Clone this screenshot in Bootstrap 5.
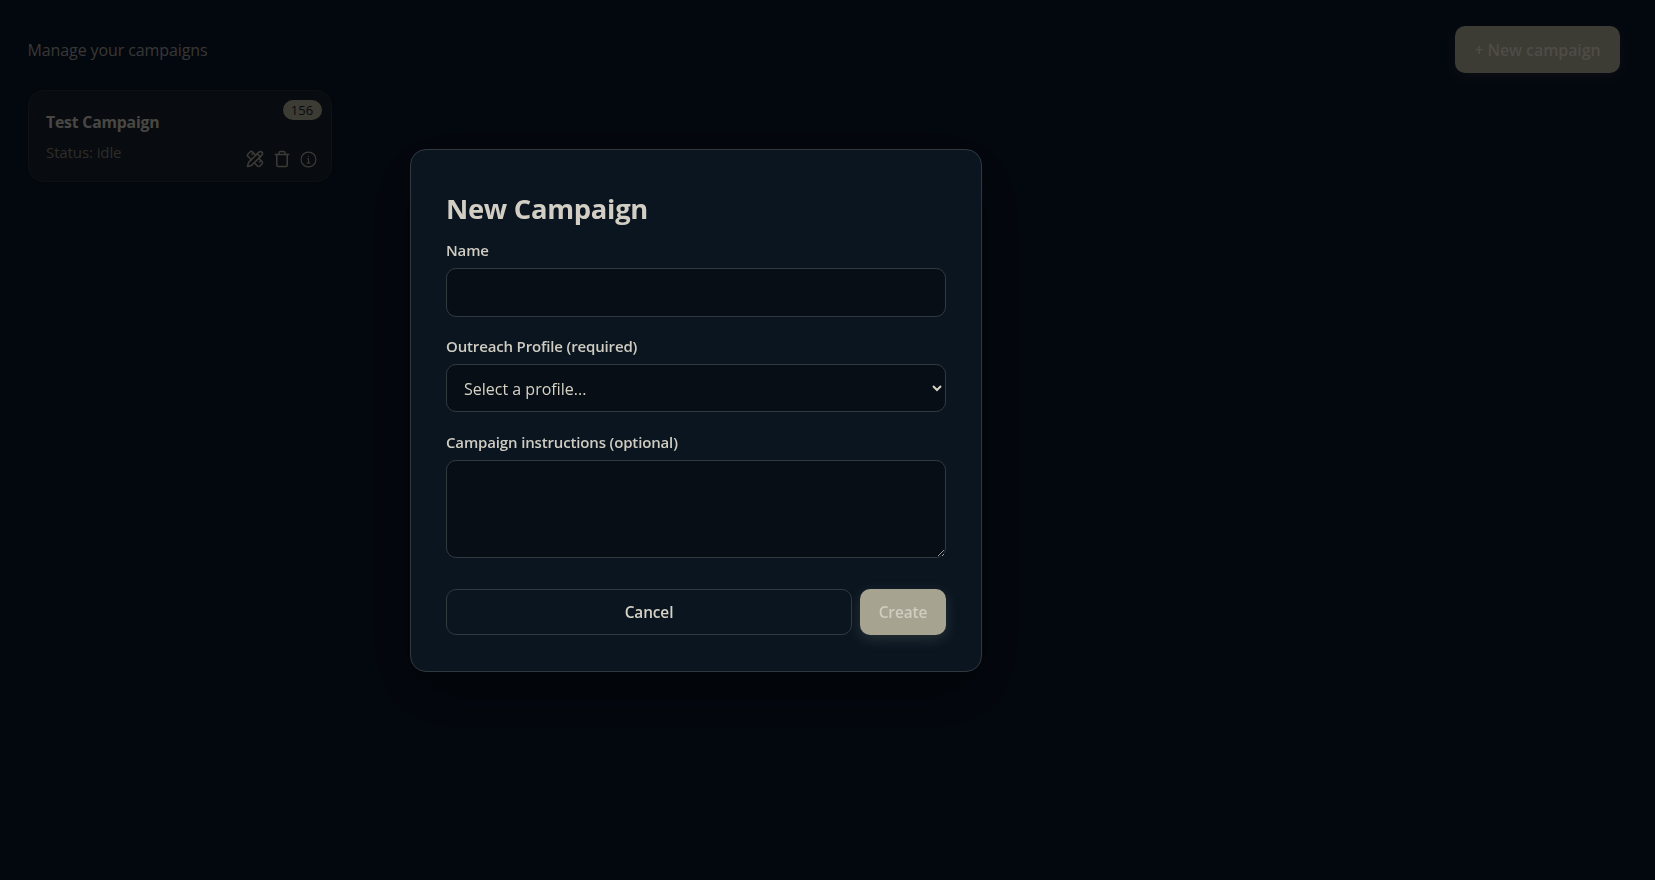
<!DOCTYPE html>
<html lang="en" data-bs-theme="dark">
<head>
  <meta charset="UTF-8">
  <title>Campaigns</title>
  <link href="https://cdn.jsdelivr.net/npm/bootstrap@5.3.3/dist/css/bootstrap.min.css" rel="stylesheet">
  <style>
    html, body { height: 100%; }
    body {
      background: #0a1628;
      color: #d6d2c4;
      font-family: "Open Sans", "Noto Sans", sans-serif;
      color-scheme: dark;
      overflow: hidden;
    }
    .page-wrap { padding: 26px 35px 0 27.5px; }
    .page-sub { font-size: 16px; color: #9a9a94; letter-spacing: -.1px; }
    .btn-new {
      background: #a6a391; color: #d6d2c4; border: 0; border-radius: 10px;
      width: 165px; height: 47px; font-weight: 600; font-size: 16px; letter-spacing: -.1px; padding: 0;
      box-shadow: 0 4px 14px rgba(166,163,145,.15);
    }
    .camp-card {
      position: relative;
      width: 304px; height: 92px; margin-top: 17px;
      background: #18212c; border: 1px solid #2b3134; border-radius: 16px;
      padding: 19px 18px 19px 17.5px;
    }
    .camp-title { font-size: 15.8px; font-weight: 700; color: #c9c6bb; line-height: 24px; letter-spacing: -.2px; }
    .camp-status { font-size: 15px; color: #7f7c70; margin-top: 7px; letter-spacing: -.1px; }
    .camp-count {
      position: absolute; top: 9px; right: 9px; width: 39px; height: 20px;
      background: #a6a391; color: #1a232c; border-radius: 10px;
      font-size: 13px; line-height: 20px; text-align: center;
    }
    .camp-icons { position: absolute; right: 13.5px; bottom: 13px; color: #a3a198; gap: 9px; }
    .camp-icons svg { display: block; width: 18px; height: 18px; fill: none; stroke: currentColor; stroke-width: 2; stroke-linecap: round; stroke-linejoin: round; }
    .camp-icons .info-ico { width: 17px; height: 17px; stroke-width: 1.6; }

    .dim-layer { position: fixed; inset: 0; background: rgba(0,0,0,.64); }
    .new-dialog {
      position: fixed; left: 410px; top: 149px; width: 572px; height: 523px;
      background: #0a1520; border: 1px solid #31393f; border-radius: 16px;
      padding: 39px 35px 36px;
      box-shadow: 0 20px 60px rgba(0,0,0,.45);
    }
    .new-dialog h2 { font-size: 27.4px; font-weight: 700; color: #d2cec3; margin: 0 0 11px; line-height: 40px; letter-spacing: -.3px; }
    .new-dialog .form-label { font-size: 15px; font-weight: 600; color: #cfccc1; line-height: 20px; margin-bottom: 8px; letter-spacing: -.15px; }
    .new-dialog .form-control, .new-dialog .form-select {
      background-color: #070e16; border: 1px solid #31393f; border-radius: 10px;
      color: #d6d2c4; box-shadow: none; font-size: 16px;
    }
    .new-dialog .form-select {
      appearance: auto; background-image: none; height: 48px; padding: 2px 16px 0 13px;
    }
    .name-input { height: 49px; }
    .instr-input { height: 98px; }
    .name-gap { margin-bottom: 19px; }
    .profile-gap { margin-bottom: 20px; }
    .instr-gap { margin-bottom: 31px; }
    .btn-cancel {
      background: transparent; color: #d6d2c4; border: 1px solid #31393f; border-radius: 10px;
      height: 46px; font-weight: 600; font-size: 15.4px; letter-spacing: -.1px; padding-top: 8px;
    }
    .btn-create {
      background: #a6a391; color: #cfccc0; border: 0; border-radius: 10px;
      width: 86px; height: 46px; font-weight: 600; font-size: 15.4px; letter-spacing: -.1px; padding: 2px 0 0;
      box-shadow: 0 4px 14px rgba(166,163,145,.2);
    }
  </style>
</head>
<body>
  <div class="page-wrap">
    <div class="d-flex justify-content-between align-items-center">
      <div class="page-sub">Manage your campaigns</div>
      <button class="btn btn-new">+ New campaign</button>
    </div>
    <div class="camp-card">
      <div class="camp-title">Test Campaign</div>
      <div class="camp-status">Status: idle</div>
      <span class="camp-count">156</span>
      <div class="camp-icons d-flex align-items-center">
        <svg viewBox="0 0 24 24"><path d="M13 7 8.7 2.7a2.41 2.41 0 0 0-3.4 0L2.7 5.3a2.41 2.41 0 0 0 0 3.4L7 13"/><path d="m8 6 2-2"/><path d="m18 16 2-2"/><path d="m17 11 4.3 4.3c.94.94.94 2.46 0 3.4l-2.6 2.6c-.94.94-2.46.94-3.4 0L11 17"/><path d="M21.174 6.812a1 1 0 0 0-3.986-3.987L3.842 16.174a2 2 0 0 0-.5.83l-1.321 4.352a.5.5 0 0 0 .623.622l4.353-1.32a2 2 0 0 0 .83-.497z"/><path d="m15 5 4 4"/></svg>
        <svg viewBox="0 0 24 24"><path d="M3 6h18"/><path d="M19 6v14a2 2 0 0 1-2 2H7a2 2 0 0 1-2-2V6"/><path d="M8 6V4a2 2 0 0 1 2-2h4a2 2 0 0 1 2 2v2"/></svg>
        <svg class="info-ico" viewBox="0 0 24 24"><circle cx="12" cy="12" r="10.5"/><path d="M12 17v-6h-1.5"/><path d="M10 17h4"/><path d="M12 7.5h.01"/></svg>
      </div>
    </div>
  </div>

  <div class="dim-layer"></div>

  <div class="new-dialog">
    <h2>New Campaign</h2>
    <form>
      <div class="name-gap">
        <label class="form-label d-block">Name</label>
        <input type="text" class="form-control name-input">
      </div>
      <div class="profile-gap">
        <label class="form-label d-block">Outreach Profile (required)</label>
        <select class="form-select">
          <option>Select a profile...</option>
        </select>
      </div>
      <div class="instr-gap">
        <label class="form-label d-block">Campaign instructions (optional)</label>
        <textarea class="form-control instr-input d-block"></textarea>
      </div>
      <div class="d-flex gap-2">
        <button type="button" class="btn btn-cancel flex-grow-1">Cancel</button>
        <button type="button" class="btn btn-create">Create</button>
      </div>
    </form>
  </div>
</body>
</html>
